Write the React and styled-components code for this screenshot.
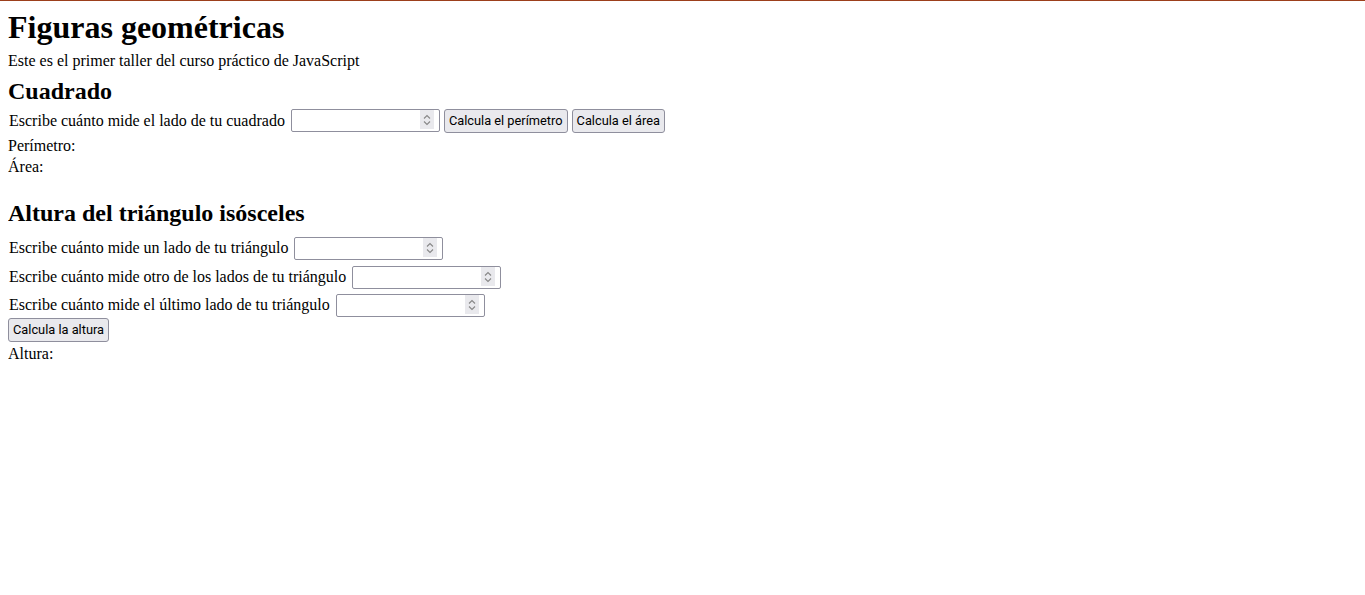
import React from "react";
import styled, { createGlobalStyle } from "styled-components";

const GlobalStyle = createGlobalStyle`
  html {
    border-top: 1px solid #9c3f1b;
    background: #ffffff;
  }
  body {
    margin: 8px;
    font-family: "Liberation Serif", "Times New Roman", serif;
    font-size: 16px;
    color: #000000;
    background: #ffffff;
  }
`;

const Page = styled.main`
  display: flex;
  flex-direction: column;
  align-items: flex-start;
`;

const Title = styled.h1`
  margin: 0;
  font-size: 32px;
  line-height: 37px;
  font-weight: bold;
`;

const Intro = styled.p`
  margin: 6px 0 0;
  line-height: 18.4px;
`;

const SectionTitle = styled.h2`
  margin: ${(p) => p.$top}px 0 0;
  font-size: 24px;
  line-height: 28px;
  font-weight: bold;
`;

const Form = styled.div`
  display: flex;
  flex-direction: column;
  align-items: flex-start;
  gap: ${(p) => p.$gap || 0}px;
  margin-top: ${(p) => p.$top}px;
`;

const Row = styled.div`
  display: flex;
  align-items: flex-start;
  gap: 4px;
`;

const Label = styled.label`
  margin: 0 2px 0 1px;
  padding-top: ${(p) => p.$top}px;
  line-height: 18.4px;
  white-space: nowrap;
`;

const InputWrap = styled.span`
  position: relative;
  display: inline-flex;
`;

const NumberInput = styled.input`
  box-sizing: border-box;
  width: 149px;
  height: 23px;
  margin: 0;
  padding: 1px 22px 1px 3px;
  border: 1px solid #8f8f9d;
  border-radius: 2px;
  background: #ffffff;
  font-family: "Roboto", "Liberation Sans", sans-serif;
  font-size: 13.33px;
  -moz-appearance: textfield;
  &::-webkit-inner-spin-button,
  &::-webkit-outer-spin-button {
    -webkit-appearance: none;
    margin: 0;
  }
`;

const Spinner = styled.span`
  position: absolute;
  right: 6px;
  top: 1px;
  width: 14px;
  height: 19px;
  background: #e9e9ed;
  pointer-events: none;
  display: flex;
`;

const Button = styled.button`
  box-sizing: border-box;
  height: 24px;
  margin: 0;
  padding: 0 4px;
  border: 1px solid #8f8f9d;
  border-radius: 3px;
  background: #e9e9ed;
  color: #000000;
  font-family: "Roboto", "Liberation Sans", sans-serif;
  font-size: 12.8px;
  line-height: 22px;
  white-space: nowrap;
  margin-top: ${(p) => p.$top || 0}px;
`;

const Result = styled.p`
  margin: ${(p) => p.$top || 0}px 0 0;
  line-height: 18.4px;
`;

function SpinIcon() {
  return (
    <svg width="14" height="19" viewBox="0 0 14 19" fill="none">
      <path d="M4 8.5 L7 5.5 L10 8.5" stroke="#878787" strokeWidth="1.1" />
      <path d="M4 11.5 L7 14.5 L10 11.5" stroke="#878787" strokeWidth="1.1" />
    </svg>
  );
}

function Field({ id }) {
  return (
    <InputWrap>
      <NumberInput id={id} type="number" />
      <Spinner>
        <SpinIcon />
      </Spinner>
    </InputWrap>
  );
}

export default function App() {
  return (
    <>
      <GlobalStyle />
      <Page>
        <Title>Figuras geométricas</Title>
        <Intro>Este es el primer taller del curso práctico de JavaScript</Intro>

        <SectionTitle $top={6.6}>Cuadrado</SectionTitle>
        <Form $top={4}>
          <Row>
            <Label htmlFor="InputCuadrado" $top={2.6}>
              Escribe cuánto mide el lado de tu cuadrado
            </Label>
            <Field id="InputCuadrado" />
            <Button type="button">Calcula el perímetro</Button>
            <Button type="button">Calcula el área</Button>
          </Row>
        </Form>
        <Result $top={4}>Perímetro:</Result>
        <Result $top={3}>Área:</Result>

        <SectionTitle $top={22}>Altura del triángulo isósceles</SectionTitle>
        <Form $top={10.2} $gap={5.5}>
          <Row>
            <Label htmlFor="lado1" $top={2}>
              Escribe cuánto mide un lado de tu triángulo
            </Label>
            <Field id="lado1" />
          </Row>
          <Row>
            <Label htmlFor="lado2" $top={2}>
              Escribe cuánto mide otro de los lados de tu triángulo
            </Label>
            <Field id="lado2" />
          </Row>
          <Row>
            <Label htmlFor="base" $top={2}>
              Escribe cuánto mide el último lado de tu triángulo
            </Label>
            <Field id="base" />
          </Row>
        </Form>
        <Button type="button" $top={1}>Calcula la altura</Button>
        <Result $top={3.4}>Altura:</Result>
      </Page>
    </>
  );
}
